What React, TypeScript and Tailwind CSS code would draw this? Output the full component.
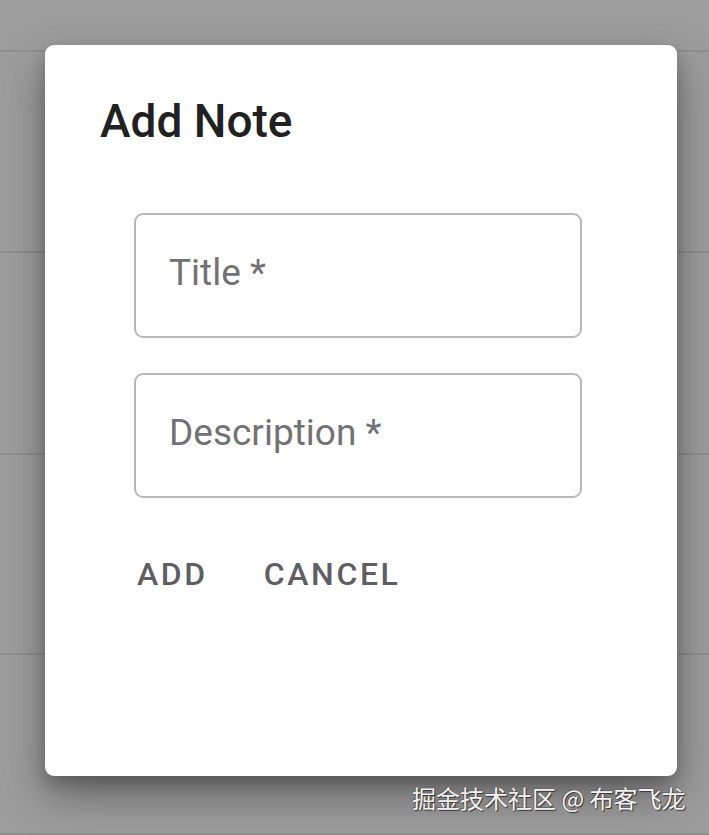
export default function App() {
  const rows = [52, 201, 202, 200, 180];

  return (
    <div className="relative h-[835px] w-[709px] overflow-hidden bg-[#9d9d9d] font-['Roboto',sans-serif]">
      {/* list behind the backdrop */}
      <div className="flex flex-col">
        {rows.map((h, i) => (
          <div
            key={i}
            className="border-b-2 border-[#8f8f8f]"
            style={{ height: h }}
          />
        ))}
      </div>

      {/* dialog */}
      <div className="absolute left-[45px] top-[45px] flex h-[731px] w-[632px] flex-col rounded-[9px] bg-white shadow-[0_20px_45px_rgba(0,0,0,0.35),0_8px_16px_rgba(0,0,0,0.2)]">
        <h2 className="pl-[55px] pt-[40px] text-[46px] font-medium leading-[72px] text-[#212121]">
          Add Note
        </h2>

        <div className="ml-[89px] mt-[56px] flex w-[448px] flex-col gap-[35px]">
          <div className="flex h-[125px] items-center rounded-[9px] border-2 border-[#b8b8b8] pb-[5px] pl-[33px]">
            <span className="text-[37px] text-[#727272]">Title *</span>
          </div>
          <div className="flex h-[125px] items-center rounded-[9px] border-2 border-[#b8b8b8] pb-[5px] pl-[33px]">
            <span className="text-[37px] text-[#727272]">Description *</span>
          </div>
        </div>

        <div className="ml-[74px] mt-[48px] flex gap-[20px]">
          <button className="px-[18px] text-[32px] font-medium uppercase leading-[56px] tracking-[2.6px] text-[#5f5f63]">
            Add
          </button>
          <button className="px-[18px] text-[32px] font-medium uppercase leading-[56px] tracking-[2.6px] text-[#5f5f63]">
            Cancel
          </button>
        </div>
      </div>

      {/* watermark */}
      <div className="absolute left-[412px] top-[786px] whitespace-nowrap font-['Noto_Sans_CJK_SC',sans-serif] text-[24px] leading-[24px] text-[#f2f2f2] [text-shadow:1px_1px_1px_#333,-1px_-1px_0_#666]">
        掘金技术社区 @ 布客飞龙
      </div>
    </div>
  );
}
